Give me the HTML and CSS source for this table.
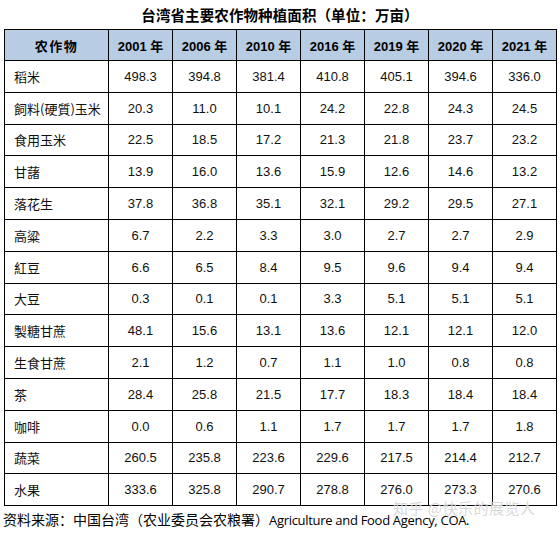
FILE: index.html
```html
<!DOCTYPE html>
<html lang="zh">
<head>
<meta charset="utf-8">
<link rel="stylesheet" href="styles.css">
</head>
<body>
<div class="page">
  <h1 class="title">台湾省主要农作物种植面积（单位：万亩）</h1>
  <table class="crops">
    <colgroup>
      <col class="c-name"><col class="c-y"><col class="c-y"><col class="c-y"><col class="c-y"><col class="c-y"><col class="c-y"><col class="c-y">
    </colgroup>
    <thead>
      <tr><th class="h-name">农作物</th><th>2001 年</th><th>2006 年</th><th>2010 年</th><th>2016 年</th><th>2019 年</th><th>2020 年</th><th>2021 年</th></tr>
    </thead>
    <tbody>
      <tr><td class="name">稻米</td><td>498.3</td><td>394.8</td><td>381.4</td><td>410.8</td><td>405.1</td><td>394.6</td><td>336.0</td></tr>
      <tr><td class="name">飼料(硬質)玉米</td><td>20.3</td><td>11.0</td><td>10.1</td><td>24.2</td><td>22.8</td><td>24.3</td><td>24.5</td></tr>
      <tr><td class="name">食用玉米</td><td>22.5</td><td>18.5</td><td>17.2</td><td>21.3</td><td>21.8</td><td>23.7</td><td>23.2</td></tr>
      <tr><td class="name">甘藷</td><td>13.9</td><td>16.0</td><td>13.6</td><td>15.9</td><td>12.6</td><td>14.6</td><td>13.2</td></tr>
      <tr><td class="name">落花生</td><td>37.8</td><td>36.8</td><td>35.1</td><td>32.1</td><td>29.2</td><td>29.5</td><td>27.1</td></tr>
      <tr><td class="name">高粱</td><td>6.7</td><td>2.2</td><td>3.3</td><td>3.0</td><td>2.7</td><td>2.7</td><td>2.9</td></tr>
      <tr><td class="name">紅豆</td><td>6.6</td><td>6.5</td><td>8.4</td><td>9.5</td><td>9.6</td><td>9.4</td><td>9.4</td></tr>
      <tr><td class="name">大豆</td><td>0.3</td><td>0.1</td><td>0.1</td><td>3.3</td><td>5.1</td><td>5.1</td><td>5.1</td></tr>
      <tr><td class="name">製糖甘蔗</td><td>48.1</td><td>15.6</td><td>13.1</td><td>13.6</td><td>12.1</td><td>12.1</td><td>12.0</td></tr>
      <tr><td class="name">生食甘蔗</td><td>2.1</td><td>1.2</td><td>0.7</td><td>1.1</td><td>1.0</td><td>0.8</td><td>0.8</td></tr>
      <tr><td class="name">茶</td><td>28.4</td><td>25.8</td><td>21.5</td><td>17.7</td><td>18.3</td><td>18.4</td><td>18.4</td></tr>
      <tr><td class="name">咖啡</td><td>0.0</td><td>0.6</td><td>1.1</td><td>1.7</td><td>1.7</td><td>1.7</td><td>1.8</td></tr>
      <tr><td class="name">蔬菜</td><td>260.5</td><td>235.8</td><td>223.6</td><td>229.6</td><td>217.5</td><td>214.4</td><td>212.7</td></tr>
      <tr><td class="name">水果</td><td>333.6</td><td>325.8</td><td>290.7</td><td>278.8</td><td>276.0</td><td>273.3</td><td>270.6</td></tr>
    </tbody>
  </table>
  <p class="source"><span class="src-cn">资料来源：中国台湾（农业委员会农粮署）</span><span class="src-en">Agriculture and Food Agency, COA.</span></p>
  <div class="watermark">知乎 @快乐的展览人</div>
</div>
</body>
</html>
```
FILE: styles.css
```css
html, body {
  margin: 0;
  padding: 0;
  background: #ffffff;
}
.page {
  position: relative;
  width: 560px;
  height: 533px;
  padding: 0 0 0 4px;
  box-sizing: border-box;
  font-family: "Liberation Sans", "Noto Sans CJK SC", sans-serif;
  color: #000;
}
.title {
  margin: 0;
  height: 29px;
  width: 552px;
  line-height: 29px;
  text-align: center;
  font-size: 14.5px;
  font-weight: bold;
  font-family: "Noto Sans CJK SC", sans-serif;
  letter-spacing: 0.1px;
}
.crops {
  border-collapse: collapse;
  table-layout: fixed;
  width: 552px;
}
.c-name { width: 104px; }
.c-y { width: 64px; }
.crops th, .crops td {
  border: 1px solid #000;
  padding: 0;
  text-align: center;
  font-size: 13px;
  white-space: nowrap;
}
.crops th {
  height: 30px;
  background: #b8cce4;
  font-weight: bold;
  font-size: 13px;
}
.crops th.h-name {
  font-family: "Noto Sans CJK SC", sans-serif;
  letter-spacing: 1.5px;
}
.crops td {
  height: 30.8px;
  color: #111;
}
.crops td.name {
  text-align: left;
  padding-left: 9px;
  font-family: "Noto Sans CJK SC", sans-serif;
  font-size: 13px;
}
.source {
  margin: 4px 0 0 -1px;
  font-size: 14px;
  line-height: 18px;
  white-space: nowrap;
}
.src-cn {
  font-family: "Noto Sans CJK SC", sans-serif;
}
.src-en {
  font-family: "Open Sans", sans-serif;
  font-size: 13px;
  letter-spacing: -0.3px;
}
.watermark {
  position: absolute;
  left: 393px;
  top: 501px;
  font-family: "Noto Sans CJK SC", sans-serif;
  font-size: 15px;
  line-height: 14px;
  color: rgba(200, 200, 200, 0.7);
  text-shadow: 0 0 1px rgba(255,255,255,0.8);
  letter-spacing: 0.5px;
  white-space: nowrap;
}
```
